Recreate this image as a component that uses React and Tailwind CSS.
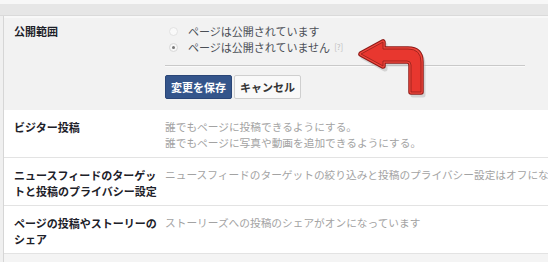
export default function App() {
  const rows = [
    {
      label: ["ビジター投稿"],
      desc: ["誰でもページに投稿できるようにする。", "誰でもページに写真や動画を追加できるようにする。"],
    },
    {
      label: ["ニュースフィードのターゲッ", "トと投稿のプライバシー設定"],
      desc: ["ニュースフィードのターゲットの絞り込みと投稿のプライバシー設定はオフになっています"],
    },
    {
      label: ["ページの投稿やストーリーの", "シェア"],
      desc: ["ストーリーズへの投稿のシェアがオンになっています"],
    },
  ];
  const d =
    "M6,18 L28,6 L28,13 L53,13 Q66,13 66,26 L66,56 L56,56 L56,29 Q56,25 52,25 L28,25 L28,30 Z";
  return (
    <div
      className="relative w-[548px] h-[262px] overflow-hidden bg-[#f4f4f4]"
      style={{ fontFamily: '"Noto Sans CJK JP", "Noto Sans", sans-serif' }}
    >
      <div className="h-[4px] bg-[#f7f7f7]" />
      <div className="h-[12px] bg-[#e6e6e6] border-b border-[#dadada]" />
      <div className="flex">
        <div className="w-[4px] shrink-0 bg-[#f0f0f0] border-r border-[#d6d6d6] h-[260px]" />
        <div className="flex-1 flex flex-col">
          {/* edit section */}
          <div className="flex h-[94px] bg-[#f2f2f2] border-t-[2px] border-[#f8f8f8] pt-[5px]">
            <div className="w-[161px] shrink-0 pl-[10px] text-[11px] leading-[16px] font-bold text-[#1d2129]">
              公開範囲
            </div>
            <div className="flex-1 flex flex-col">
              <div className="flex flex-col pl-[4px]">
                <div className="flex items-center h-[16px] gap-[10px] text-[11px] text-[#4b4f56]">
                  <span className="w-[9px] h-[9px] rounded-full border border-[#e2e2e2] bg-[#f9f9f9]" />
                  <span>ページは公開されています</span>
                </div>
                <div className="flex items-center h-[16px] gap-[10px] text-[11px] text-[#4b4f56]">
                  <span className="w-[9px] h-[9px] rounded-full border border-[#d8d8d8] bg-[#f7f7f7] flex items-center justify-center">
                    <span className="w-[3px] h-[3px] rounded-full bg-[#777]" />
                  </span>
                  <span>ページは公開されていません</span>
                  <span className="-ml-[6px] text-[8px] text-[#bdbdbd]">[?]</span>
                </div>
              </div>
              <div className="mt-[10px] w-[360px] h-[2px] border-t border-[#c9c9c9] border-b-[#fafafa] border-b" />
              <div className="mt-[8px] flex gap-[2px]">
                <button className="h-[24px] w-[67px] bg-[#34558b] border border-[#2a4677] text-white text-[11px] font-bold rounded-[2px]">
                  変更を保存
                </button>
                <button className="h-[24px] w-[67px] bg-[#f9f9f9] border border-[#cfcfcf] text-[#333] text-[11px] font-bold rounded-[2px]">
                  キャンセル
                </button>
              </div>
            </div>
          </div>
          {rows.map((r, i) => (
            <div key={i} className="flex h-[48px] bg-white border-b border-[#e3e3e3] pt-[9px]">
              <div className="w-[161px] shrink-0 pl-[10px] text-[11px] leading-[16px] font-bold text-[#1d2129]">
                {r.label.map((l, j) => (
                  <div key={j} className="whitespace-nowrap">{l}</div>
                ))}
              </div>
              <div className="flex-1 text-[10.7px] leading-[16px] text-[#a3a3a3] whitespace-nowrap overflow-hidden">
                {r.desc.map((t, j) => (
                  <div key={j}>{t}</div>
                ))}
              </div>
            </div>
          ))}
        </div>
      </div>
      {/* red arrow annotation */}
      <svg className="absolute left-[355px] top-[36px]" width="75" height="62" viewBox="0 0 75 62">
        <path d={d} transform="translate(2,3)" fill="#b8b8b8" opacity="0.5" stroke="#b8b8b8" strokeWidth="5" strokeLinejoin="round" />
        <path d={d} fill="#e53a32" stroke="#8e1a17" strokeWidth="5.5" strokeLinejoin="round" />
        <path d={d} fill="#e53a32" stroke="#f0473d" strokeWidth="3.5" strokeLinejoin="round" />
        <path d={d} fill="#e8372f" stroke="#9c221d" strokeWidth="0.9" strokeLinejoin="round" />
      </svg>
    </div>
  );
}
